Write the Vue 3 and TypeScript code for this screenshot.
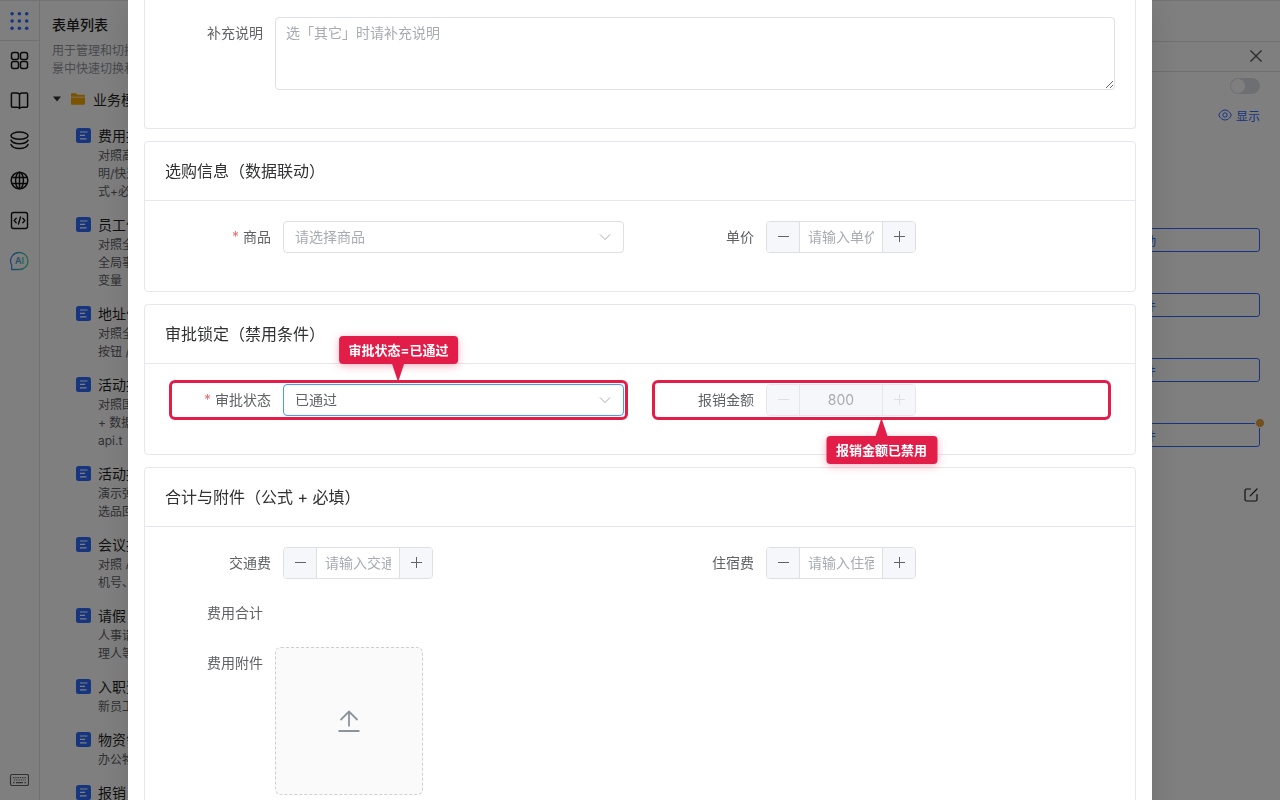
<script setup lang="ts">
import { ref } from 'vue'

interface FormEntry {
  title: string
  lines: string[]
}

const forms: FormEntry[] = [
  { title: '费用报销', lines: ['对照高级', '明/快速', '式+必填'] },
  { title: '员工信息', lines: ['对照全局', '全局事件', '变量'] },
  { title: '地址信息', lines: ['对照全局', '按钮 / 值'] },
  { title: '活动报名', lines: ['对照国际', '+ 数据源', 'api.t'] },
  { title: '活动报名', lines: ['演示弹窗', '选品回填'] },
  { title: '会议报名', lines: ['对照 API', '机号、邮'] },
  { title: '请假', lines: ['人事请假', '理人等'] },
  { title: '入职登记', lines: ['新员工入'] },
  { title: '物资领用', lines: ['办公物资'] },
  { title: '报销', lines: [] },
]

const actions = [
  { label: '设置联动', dot: false },
  { label: '配置事件', dot: false },
  { label: '配置事件', dot: false },
  { label: '配置条件', dot: true },
]

const remark = ref('')
const product = ref('')
const status = ref('approved')
const price = ref('')
const amount = ref('800')
const traffic = ref('')
const hotel = ref('')
const enabled = ref(false)
</script>

<template>
  <div class="app">
    <nav class="rail" aria-label="主导航">
      <button class="rail-btn rail-logo" type="button" aria-label="应用">
        <svg width="20" height="20" viewBox="0 0 20 20" fill="#2e6bff">
          <template v-for="r in 3" :key="r">
            <circle v-for="c in 3" :key="c" :cx="c * 7.3 - 4.2" :cy="r * 7.3 - 4.6" r="1.8" />
          </template>
        </svg>
      </button>
      <button class="rail-btn" type="button" aria-label="组件">
        <svg width="20" height="20" viewBox="0 0 20 20" fill="none" stroke="currentColor" stroke-width="1.5">
          <rect x="2.5" y="1.600" width="7" height="7" rx="2" />
          <rect x="11.500" y="1.600" width="7" height="7" rx="2" />
          <rect x="2.5" y="10.600" width="7" height="7" rx="2" />
          <rect x="11.500" y="10.600" width="7" height="7" rx="2" />
        </svg>
      </button>
      <button class="rail-btn" type="button" aria-label="文档">
        <svg width="20" height="20" viewBox="-.5 .5 20 20" fill="none" stroke="currentColor" stroke-width="1.5" stroke-linejoin="round">
          <path d="M10 3.600C9.200 2.600 8 2.400 6.600 2.400H2.900c-.6 0-1 .4-1 1v12.300c0 .6.4 1 1 1h4.600c1.100 0 1.900.4 2.500 1.200.6-.8 1.400-1.200 2.500-1.200h4.600c.6 0 1-.4 1-1V3.400c0-.6-.4-1-1-1h-3.700C12 2.400 10.800 2.600 10 3.600zM10 3.600v14.300" />
        </svg>
      </button>
      <button class="rail-btn" type="button" aria-label="数据">
        <svg width="20" height="20" viewBox="-.5 .5 20 20" fill="none" stroke="currentColor" stroke-width="1.5" stroke-linecap="round">
          <ellipse cx="10" cy="5.200" rx="8.500" ry="3.600" />
          <path d="M1.500 9.600c1 2.300 4.400 3.600 8.500 3.600s7.500-1.300 8.500-3.600M1.500 14c1 2.400 4.400 4 8.500 4s7.500-1.600 8.500-4" />
        </svg>
      </button>
      <button class="rail-btn" type="button" aria-label="语言">
        <svg width="20" height="20" viewBox="-.5 .5 20 20" fill="none" stroke="currentColor" stroke-width="1.5">
          <circle cx="10" cy="10" r="8.300" />
          <ellipse cx="10" cy="10" rx="3.900" ry="8.300" />
          <path d="M10 1.700v16.600M2.600 6.900h14.800M2.600 13.100h14.800" />
        </svg>
      </button>
      <button class="rail-btn" type="button" aria-label="代码">
        <svg width="20" height="20" viewBox="-.5 .5 20 20" fill="none" stroke="currentColor" stroke-width="1.400" stroke-linecap="round" stroke-linejoin="round">
          <rect x="2" y="2" width="16" height="16" rx="2" />
          <path d="M6.700 7.700L4.700 10l2 2.300M13.300 7.700l2 2.300-2 2.300M11 6.500L9 13.500" />
        </svg>
      </button>
      <button class="rail-btn" type="button" aria-label="AI 助手">
        <svg width="20" height="20" viewBox="-.5 0 20 20" fill="none">
          <defs>
            <linearGradient id="ai" x1="0" y1="0" x2="1" y2="0">
              <stop offset="0" stop-color="#3b8cf0" />
              <stop offset="1" stop-color="#4fcf9a" />
            </linearGradient>
          </defs>
          <path d="M10 1.500a8.500 8.500 0 1 1 0 17H2.200v-4.400A8.500 8.500 0 0 1 10 1.500z" stroke="url(#ai)" stroke-width="1.300" stroke-linejoin="round" />
          <text x="10" y="13.200" text-anchor="middle" font-size="9" font-weight="600" font-family="Inter, sans-serif" fill="url(#ai)">AI</text>
        </svg>
      </button>
      <button class="rail-btn rail-last" type="button" aria-label="键盘">
        <svg width="20" height="20" viewBox="-.5 0 20 20" fill="none" stroke="#606266" stroke-width="1.200">
          <rect x="1" y="4.500" width="18" height="11" rx="1.500" />
          <path d="M3.500 7.600h13M4.500 10h12" stroke-dasharray="1.300 1" />
          <path d="M3.500 12.600h1.500M6.500 12.600h7M15 12.600h1.500" />
        </svg>
      </button>
    </nav>

    <aside class="side">
      <h2 class="side-title">表单列表</h2>
      <p class="side-desc"><span>用于管理和切换</span><span>景中快速切换和</span></p>
      <div class="folder">
        <svg width="10" height="10" viewBox="0 0 10 10"><path d="M1 2.500h8L5 7.500z" fill="#303133" /></svg>
        <svg width="16" height="16" viewBox="0 0 16 16">
          <path d="M1 3.200c0-.6.4-1 1-1h4l1.500 1.600H14c.6 0 1 .4 1 1v.9H1z" fill="#f5a800" />
          <path d="M1 6.400h14v6.400c0 .6-.4 1-1 1H2c-.6 0-1-.4-1-1z" fill="#f5a800" />
        </svg>
        <span>业务模板</span>
      </div>
      <ul class="forms">
        <li v-for="(form, i) in forms" :key="i" class="form-entry">
          <svg class="form-icon" width="15" height="15" viewBox="0 0 15 15">
            <rect width="15" height="15" rx="2.500" fill="#2e6bff" />
            <path d="M4 4h7.500M4 7.400h5M4 10.900h6.500" stroke="#fff" stroke-width="1.200" />
          </svg>
          <div class="form-text">
            <div class="form-title">{{ form.title }}</div>
            <div v-for="line in form.lines" :key="line" class="form-line">{{ line }}</div>
          </div>
        </li>
      </ul>
    </aside>

    <main class="stage"></main>

    <aside class="panel">
      <div class="panel-top"></div>
      <div class="panel-head">
        <button class="plain" type="button" aria-label="关闭">
          <svg width="12" height="12" viewBox="0 0 12 12" stroke="#505256" stroke-width="1.300"><path d="M.5.5l11 11M11.500.5l-11 11" /></svg>
        </button>
      </div>
      <div class="panel-switch">
        <input v-model="enabled" class="switch" type="checkbox" aria-label="启用" />
      </div>
      <div class="panel-show">
        <button class="plain show-btn" type="button">
          <svg width="14" height="14" viewBox="0 0 14 14" fill="none" stroke="currentColor">
            <path d="M.7 7C2 4 4.200 2 7 2s5 2 6.300 5C12 10 9.800 12 7 12S2 10 .7 7z" />
            <circle cx="7" cy="7" r="2.200" />
          </svg>
          <span>显示</span>
        </button>
      </div>
      <div class="actions">
        <button v-for="(action, i) in actions" :key="i" class="action" type="button">
          {{ action.label }}<i v-if="action.dot" class="dot"></i>
        </button>
      </div>
      <div class="panel-edit">
        <button class="plain" type="button" aria-label="编辑">
          <svg width="16" height="16" viewBox="0 0 16 16" fill="none" stroke="#1f1f1f" stroke-width="1.200" stroke-linecap="round" stroke-linejoin="round">
            <path d="M7.500 2H3.500C2.600 2 2 2.600 2 3.500v9c0 .9.6 1.500 1.500 1.500h9c.9 0 1.500-.6 1.500-1.500V7.500M7.200 8.800L14 2" />
          </svg>
        </button>
      </div>
    </aside>
  </div>

  <div class="overlay">
    <form class="modal" role="dialog" aria-label="表单预览" @submit.prevent>
      <section class="card card-first">
        <div class="card-body">
          <div class="item">
            <label class="label" for="remark">补充说明</label>
            <div class="control">
              <textarea id="remark" v-model="remark" class="textarea" placeholder="选「其它」时请补充说明"></textarea>
            </div>
          </div>
        </div>
      </section>

      <section class="card">
        <h3 class="card-head">选购信息（数据联动）</h3>
        <div class="card-body">
          <div class="row">
            <div class="item">
              <label class="label required" for="product">商品</label>
              <div class="control select-wrap">
                <select id="product" v-model="product" class="select placeholder">
                  <option value="">请选择商品</option>
                </select>
                <svg class="chevron" width="14" height="14" viewBox="0 0 14 14"><path d="M2 4.500l5 5 5-5" /></svg>
              </div>
            </div>
            <div class="item">
              <label class="label" for="price">单价</label>
              <div class="number">
                <button type="button" aria-label="减少"><svg width="14" height="14" viewBox="0 0 14 14"><path d="M2 6.500h11" /></svg></button>
                <input id="price" v-model="price" placeholder="请输入单价" />
                <button type="button" aria-label="增加"><svg width="14" height="14" viewBox="0 0 14 14"><path d="M2 6.500h11M7.500 1v11" /></svg></button>
              </div>
            </div>
          </div>
        </div>
      </section>

      <section class="card">
        <h3 class="card-head">审批锁定（禁用条件）</h3>
        <div class="card-body">
          <div class="row">
            <div class="item marked">
              <label class="label required" for="status">审批状态</label>
              <div class="control select-wrap">
                <select id="status" v-model="status" class="select active">
                  <option value="approved">已通过</option>
                </select>
                <svg class="chevron" width="14" height="14" viewBox="0 0 14 14"><path d="M2 4.500l5 5 5-5" /></svg>
              </div>
              <div class="tip tip-above">审批状态=已通过</div>
            </div>
            <div class="item marked">
              <label class="label" for="amount">报销金额</label>
              <div class="number disabled">
                <button type="button" aria-label="减少" disabled><svg width="14" height="14" viewBox="0 0 14 14"><path d="M2 6.500h11" /></svg></button>
                <input id="amount" v-model="amount" disabled />
                <button type="button" aria-label="增加" disabled><svg width="14" height="14" viewBox="0 0 14 14"><path d="M2 6.500h11M7.500 1v11" /></svg></button>
              </div>
              <div class="tip tip-below">报销金额已禁用</div>
            </div>
          </div>
        </div>
      </section>

      <section class="card">
        <h3 class="card-head">合计与附件（公式 + 必填）</h3>
        <div class="card-body">
          <div class="row">
            <div class="item">
              <label class="label" for="traffic">交通费</label>
              <div class="number">
                <button type="button" aria-label="减少"><svg width="14" height="14" viewBox="0 0 14 14"><path d="M2 6.500h11" /></svg></button>
                <input id="traffic" v-model="traffic" placeholder="请输入交通费" />
                <button type="button" aria-label="增加"><svg width="14" height="14" viewBox="0 0 14 14"><path d="M2 6.500h11M7.500 1v11" /></svg></button>
              </div>
            </div>
            <div class="item">
              <label class="label" for="hotel">住宿费</label>
              <div class="number">
                <button type="button" aria-label="减少"><svg width="14" height="14" viewBox="0 0 14 14"><path d="M2 6.500h11" /></svg></button>
                <input id="hotel" v-model="hotel" placeholder="请输入住宿费" />
                <button type="button" aria-label="增加"><svg width="14" height="14" viewBox="0 0 14 14"><path d="M2 6.500h11M7.500 1v11" /></svg></button>
              </div>
            </div>
          </div>
          <div class="item">
            <span class="label">费用合计</span>
            <output class="control" aria-label="费用合计"></output>
          </div>
          <div class="item">
            <span id="files" class="label">费用附件</span>
            <button class="upload" type="button" aria-labelledby="files">
              <svg width="28" height="28" viewBox="0 0 28 28" fill="none" stroke="#8c939d" stroke-width="1.800">
                <path d="M3.500 24h21M14 19.500V5M5.500 13L14 4.500l8.500 8.500" />
              </svg>
            </button>
          </div>
        </div>
      </section>
    </form>
  </div>
</template>

<style>
body {
  margin: 0;
  overflow: hidden;
}
</style>

<style scoped>
.app,
.overlay {
  font-family: Inter, "Noto Sans CJK SC", sans-serif;
  font-size: 14px;
  color: #303133;
}
.app *,
.overlay * {
  box-sizing: border-box;
}
.app {
  display: flex;
  height: 100vh;
  overflow: hidden;
  background: #fff;
  color: #1f1f1f;
  box-sizing: border-box;
  border-top: 1px solid #e4e7ed;
}
button,
input,
select,
textarea {
  font: inherit;
  margin: 0;
}
svg {
  display: block;
}

.rail {
  display: flex;
  flex-direction: column;
  flex: none;
  width: 40px;
  border-right: 1px solid #e0e0e0;
}
.rail-btn {
  display: flex;
  align-items: center;
  justify-content: center;
  height: 40px;
  padding: 0 1px 0 0;
  border: 0;
  background: none;
  color: #141414;
}
.rail-logo {
  border-bottom: 1px solid #e0e0e0;
}
.rail-last {
  margin-top: auto;
}

.side {
  flex: none;
  width: 220px;
  padding: 12px 0 0 12px;
  white-space: nowrap;
}
.side-title {
  margin: 0;
  font-size: 14px;
  line-height: 24px;
  font-weight: 500;
}
.side-desc {
  margin: 5px 0 0;
  font-size: 12px;
  line-height: 18px;
  color: #909399;
}
.side-desc span {
  display: block;
}
.folder {
  display: flex;
  align-items: center;
  height: 42px;
}
.folder svg:nth-child(2) {
  margin: 0 7px 0 8px;
}
.forms {
  margin: 5px 0 0;
  padding: 0 0 0 24px;
  list-style: none;
}
.form-entry {
  display: flex;
  gap: 7px;
  padding-bottom: 13px;
}
.form-icon {
  flex: none;
  margin-top: 3px;
}
.form-title {
  line-height: 22px;
}
.form-line {
  font-size: 12px;
  line-height: 18px;
  color: #606266;
}

.stage {
  flex: 1;
}
.panel {
  flex: none;
  width: 296px;
  border-left: 1px solid #e4e7ed;
}
.panel-top {
  height: 41px;
  border-bottom: 1px solid #e0e0e0;
}
.panel-head {
  display: flex;
  align-items: center;
  justify-content: flex-end;
  height: 30px;
  padding: 0 18px 1px 0;
  border-bottom: 1px solid #e0e0e0;
}
.plain {
  padding: 0;
  border: 0;
  background: none;
}
.panel-switch,
.panel-show {
  display: flex;
  align-items: center;
  justify-content: flex-end;
  height: 30px;
  padding-right: 20px;
}
.panel-switch {
  height: 28px;
}
.switch {
  appearance: none;
  width: 30px;
  height: 16px;
  padding: 1px;
  border-radius: 8px;
  background: #dcdfe6;
}
.switch::before {
  content: "";
  display: block;
  width: 14px;
  height: 14px;
  border-radius: 50%;
  background: #fff;
}
.show-btn {
  display: flex;
  align-items: center;
  gap: 4px;
  font-size: 12px;
  color: #2e6bff;
}
.actions {
  display: grid;
  gap: 41px;
  padding: 98px 20px 0 19px;
}
.action {
  position: relative;
  height: 24px;
  padding: 0;
  border: 1px solid #2e6bff;
  border-radius: 3px;
  background: none;
  font-size: 12px;
  color: #2e6bff;
}
.dot {
  position: absolute;
  top: -6px;
  right: -6px;
  width: 8px;
  height: 8px;
  border: 1px solid #fff;
  border-radius: 50%;
  background: #e6a23c;
  box-sizing: content-box;
}
.panel-edit {
  display: flex;
  justify-content: flex-end;
  padding: 40px 21px 0 0;
}

.overlay {
  position: fixed;
  inset: 0;
  overflow: hidden;
  background: rgba(0, 0, 0, 0.5);
}
.modal {
  display: flex;
  flex-direction: column;
  gap: 12px;
  width: 80%;
  min-height: 100%;
  margin: 0 auto;
  padding: 0 16px;
  background: #fff;
  box-shadow: 0 0 32px rgba(0, 0, 0, 0.12);
}
.card {
  border: 1px solid #e4e7ed;
  border-radius: 4px;
}
.card-first {
  border-top: 0;
  border-radius: 0 0 4px 4px;
}
.card-head {
  margin: 0;
  padding: 0 20px;
  border-bottom: 1px solid #e4e7ed;
  font-size: 16px;
  line-height: 58px;
  font-weight: 400;
}
.card-body {
  padding: 20px;
}
.card-first .card-body {
  padding-top: 17px;
}
.row {
  display: grid;
  grid-template-columns: 1fr 1fr;
  gap: 32px;
  padding: 0 8px;
}
.item {
  position: relative;
  display: flex;
  align-items: flex-start;
  min-height: 32px;
  margin-bottom: 18px;
}
.label {
  flex: none;
  width: 110px;
  padding-right: 12px;
  line-height: 32px;
  text-align: right;
  color: #606266;
}
.required::before {
  content: "*";
  margin-right: 4px;
  color: #f56c6c;
}
.control {
  flex: 1;
  min-width: 0;
}
.textarea {
  display: block;
  width: 100%;
  height: 73px;
  padding: 4px 10px;
  border: 1px solid #dcdfe6;
  border-radius: 4px;
  line-height: 21px;
  color: #606266;
  outline: 0;
}
.textarea::placeholder,
.number input::placeholder {
  color: #a8abb2;
  opacity: 1;
}
.select-wrap {
  position: relative;
}
.select {
  display: block;
  appearance: none;
  width: 100%;
  height: 32px;
  padding: 0 11px 2px;
  border: 1px solid #dcdfe6;
  border-radius: 4px;
  background: #fff;
  color: #606266;
  outline: 0;
}
.select.placeholder {
  color: #a8abb2;
}
.select.active {
  border-color: #409eff;
}
.chevron {
  position: absolute;
  top: 9px;
  right: 12px;
  fill: none;
  stroke: #a8abb2;
  pointer-events: none;
}
.number {
  display: flex;
  width: 150px;
  height: 32px;
  overflow: hidden;
  border: 1px solid #dcdfe6;
  border-radius: 4px;
}
.number button {
  display: flex;
  align-items: center;
  justify-content: center;
  flex: none;
  width: 32px;
  padding: 0;
  border: 0;
  background: #f5f7fa;
}
.number button svg {
  fill: none;
  stroke: #606266;
}
.number input {
  flex: 1;
  min-width: 0;
  padding: 0 8px 2px;
  border: solid #dcdfe6;
  border-width: 0 1px;
  background: #fff;
  color: #606266;
  text-align: center;
  outline: 0;
}
.number.disabled,
.number.disabled input {
  border-color: #e4e7ed;
}
.number.disabled input {
  background: #f5f7fa;
  color: #a8abb2;
}
.number.disabled button svg {
  stroke: #dcdfe6;
}
.marked::after {
  content: "";
  position: absolute;
  inset: -4px;
  border: 3px solid #e11d48;
  border-radius: 6px;
  pointer-events: none;
}
.tip {
  position: absolute;
  z-index: 1;
  left: 50%;
  transform: translateX(-50%);
  padding: 0 10px;
  border-radius: 4px;
  background: #e11d48;
  box-shadow: 0 2px 8px rgba(225, 29, 72, 0.35);
  font-size: 13px;
  line-height: 28px;
  font-weight: 700;
  white-space: nowrap;
  color: #fff;
}
.tip::after {
  content: "";
  position: absolute;
  left: 50%;
  margin-left: -6px;
  border: 6px solid transparent;
}
.tip-above {
  bottom: 52px;
}
.tip-above::after {
  top: 100%;
  border-width: 18px 6px 0;
  border-top-color: #e11d48;
}
.tip-below {
  top: 52px;
}
.tip-below::after {
  bottom: 100%;
  border-width: 0 6px 18px;
  border-bottom-color: #e11d48;
}
.upload {
  display: flex;
  align-items: center;
  justify-content: center;
  width: 148px;
  height: 148px;
  border: 1px dashed #cdd0d6;
  border-radius: 6px;
  background: #fafafa;
}
</style>
